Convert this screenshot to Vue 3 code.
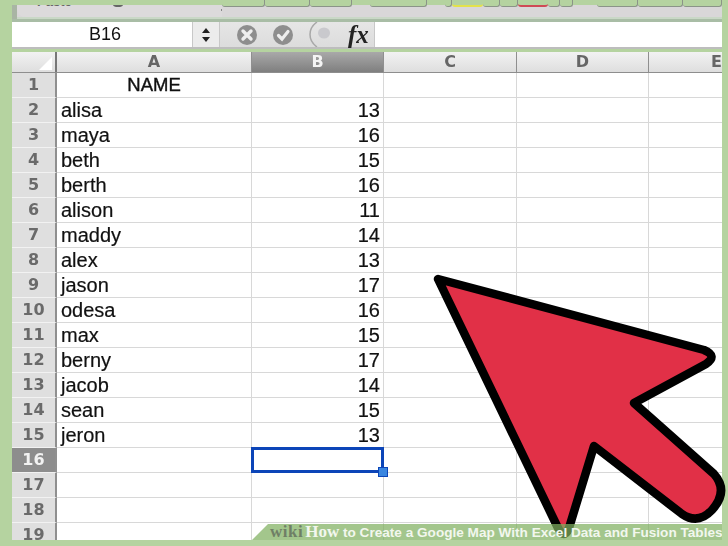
<script setup>
const columns = ['A', 'B', 'C', 'D', 'E']

const people = [
  ['alisa', 13], ['maya', 16], ['beth', 15], ['berth', 16], ['alison', 11],
  ['maddy', 14], ['alex', 13], ['jason', 17], ['odesa', 16], ['max', 15],
  ['berny', 17], ['jacob', 14], ['sean', 15], ['jeron', 13]
]

const rows = [
  { n: 1, name: 'NAME', score: '', head: true },
  ...people.map(([name, score], i) => ({ n: i + 2, name, score })),
  { n: 16, name: '', score: '', active: true },
  { n: 17, name: '', score: '' },
  { n: 18, name: '', score: '' },
  { n: 19, name: '', score: '' }
]

// top ribbon tabs, left to right
const tabs = [
  { w: 43 }, { w: 45 }, { w: 42 }, { w: 0, gap: 18 }, { w: 57 }, { w: 0, gap: 18 },
  { w: 7 }, { w: 31, tone: 'yellow' }, { w: 17 }, { w: 18 }, { w: 30, tone: 'red' }, { w: 12 }, { w: 13 },
  { w: 0, gap: 24 }, { w: 41 }, { w: 45 }, { w: 39 }
]
</script>

<template>
  <div class="page">
    <div class="ribbon">
      <div class="home"><span class="paste">Paste</span><i class="knob"></i><i class="dot"></i></div>
      <template v-for="(t, i) in tabs" :key="i">
        <div v-if="t.w" class="tab" :class="t.tone" :style="{ width: t.w + 'px' }"></div>
        <div v-else class="notch" :style="{ width: t.gap + 'px' }"></div>
      </template>
    </div>

    <div class="formula">
      <div class="namebox">B16</div>
      <div class="stepper">
        <svg width="10" height="20" viewBox="0 0 10 20">
          <path d="M5 3 9 8H1Z M5 17 1 12H9Z" fill="#222" />
        </svg>
      </div>
      <div class="actions">
        <svg width="20" height="20" viewBox="0 0 20 20">
          <circle cx="10" cy="10" r="10" fill="#8e8e8e" />
          <path d="M6 6 14 14M14 6 6 14" stroke="#eee" stroke-width="3.4" stroke-linecap="round" />
        </svg>
        <svg width="20" height="20" viewBox="0 0 20 20">
          <circle cx="10" cy="10" r="10" fill="#8e8e8e" />
          <path d="M5.5 10.5 9 14 15 6.5" fill="none" stroke="#eee" stroke-width="3.2" stroke-linecap="round" />
        </svg>
        <div class="fx-wrap">
          <svg width="26" height="25" viewBox="0 0 26 25">
            <path d="M8 0Q1 5 1 12.5 1 20 8 25" fill="none" stroke="#a8a8a8" stroke-width="1.5" />
            <ellipse cx="15" cy="11" rx="6" ry="5.5" fill="#c9c9cd" />
          </svg>
          <span class="fx">fx</span>
        </div>
      </div>
      <div class="input"></div>
    </div>

    <div class="sheet">
      <div class="colhead">
        <div class="corner"><i></i></div>
        <div v-for="c in columns" :key="c" class="col" :class="{ on: c === 'B' }">{{ c }}</div>
      </div>
      <div v-for="r in rows" :key="r.n" class="row">
        <div class="rownum" :class="{ on: r.active }">{{ r.n }}</div>
        <div class="cell name" :class="{ head: r.head }">{{ r.name }}</div>
        <div class="cell score" :class="{ picked: r.active }">
          {{ r.score }}
          <i v-if="r.active" class="handle"></i>
        </div>
        <div class="cell"></div>
        <div class="cell"></div>
        <div class="cell last"></div>
      </div>
    </div>

    <svg class="arrow" width="728" height="546" viewBox="0 0 728 546">
      <path
        d="M438 279 704 350Q718 356 706 364L634 403 714 474Q729 491 712 510 698 525 682 514L594 446 569 528Q564 540 558 528Z"
        fill="#e13047"
        stroke="#000"
        stroke-width="8.5"
        stroke-linejoin="round"
      />
    </svg>

    <div class="banner">
      <span class="wiki">wiki</span><span class="how">How</span><span class="title"> to Create a Google Map With Excel Data and Fusion Tables</span>
    </div>
  </div>
</template>

<style scoped>
.page {
  width: 728px;
  height: 546px;
  box-sizing: border-box;
  padding: 0 6px 0 12px;
  background: #b5d3a0;
  overflow: hidden;
  position: relative;
  font-family: 'Liberation Sans', Arial, sans-serif;
}

.ribbon {
  height: 22px;
  box-sizing: border-box;
  padding-left: 5px;
  display: flex;
  align-items: flex-start;
  border-bottom: 3px solid #a9bda6;
  background: linear-gradient(#b5d3a0 0 5px, #d9d7d8 5px 17px, #c9d8c6 17px);
  overflow: hidden;
  position: relative;
}

.ribbon::before {
  content: '';
  position: absolute;
  left: 0;
  top: 5px;
  bottom: 0;
  width: 5px;
  background: #a9b5a4;
}

.home {
  width: 205px;
  height: 12px;
  margin-top: 5px;
  flex: none;
  position: relative;
  overflow: hidden;
  background: #dcdadb;
  border-radius: 0 0 0 8px;
  font-size: 13px;
  font-weight: 700;
  color: #666;
}

.paste {
  position: absolute;
  left: 20px;
  top: -11px;
}

.knob {
  position: absolute;
  left: 96px;
  top: -3px;
  width: 10px;
  height: 5px;
  border-radius: 50%;
  background: #666;
}

.dot {
  position: absolute;
  right: -1px;
  top: 4px;
  width: 2px;
  height: 2px;
  background: #888;
}

.tab {
  flex: none;
  height: 7px;
  box-sizing: border-box;
  background: #b5d3a0;
  border-bottom: 1.5px solid #8b9488;
  border-right: 1px solid #8b9488;
  border-radius: 0 0 3px 3px;
}

.tab.yellow {
  border-bottom: 2px solid #e3e24a;
  border-right: 0;
}

.tab.red {
  border-bottom: 2px solid #cf4a55;
  border-right: 0;
}

.notch {
  flex: none;
  height: 5px;
}

.formula {
  height: 27px;
  box-sizing: border-box;
  display: flex;
  background: #fff;
  border-bottom: 2px solid #bdbdbd;
}

.namebox {
  width: 180px;
  flex: none;
  box-sizing: border-box;
  padding-left: 6px;
  font-size: 18px;
  line-height: 25px;
  text-align: center;
  color: #111;
  filter: blur(0.3px);
}

.stepper {
  width: 28px;
  flex: none;
  background: #ececec;
  border-left: 1px solid #c8c8c8;
  border-right: 1px solid #c8c8c8;
  box-sizing: border-box;
  display: flex;
  align-items: center;
  justify-content: center;
}

.actions {
  width: 155px;
  flex: none;
  display: flex;
  align-items: center;
  gap: 16px;
  padding-left: 17px;
  box-sizing: border-box;
  background: linear-gradient(#e6e6e6, #dcdcdc);
  border-right: 1px solid #c8c8c8;
}

.fx-wrap {
  display: flex;
  align-items: center;
  height: 25px;
  gap: 13px;
  filter: blur(0.3px);
}

.fx {
  font-family: 'Liberation Serif', serif;
  font-style: italic;
  font-weight: 700;
  font-size: 25px;
  line-height: 25px;
  color: #222;
}

.input {
  flex: 1;
}

.sheet {
  margin-top: 3px;
  height: 488px;
  overflow: hidden;
}

.colhead,
.row {
  display: grid;
  grid-template-columns: 45px 195px 132px 133px 132px 1fr;
}

.colhead {
  height: 21px;
  border-bottom: 1.5px solid #8e8e8e;
  box-sizing: border-box;
  background: linear-gradient(#f2f2f2, #dedede);
}

.corner {
  border-right: 2px solid #777;
  position: relative;
}

.corner i {
  position: absolute;
  right: 3px;
  bottom: 2px;
  border-style: solid;
  border-width: 0 0 13px 13px;
  border-color: transparent transparent #fff transparent;
}

.col {
  border-right: 1.5px solid #8f8f8f;
  text-align: center;
  font-family: 'DejaVu Sans', sans-serif;
  font-weight: 700;
  font-size: 16px;
  line-height: 20px;
  color: #666;
  box-sizing: border-box;
  filter: blur(0.3px);
}

.col:last-child {
  border-right: 0;
  text-align: left;
  padding-left: 62px;
}

.col.on {
  background: linear-gradient(#a9a9a9, #7f7f7f);
  color: #f4f4f4;
}

.row {
  height: 25px;
}

.rownum {
  background: #dfdfdf;
  border-right: 2px solid #8f8f8f;
  border-bottom: 1.5px solid #f2f2f2;
  box-sizing: border-box;
  text-align: center;
  font-family: 'DejaVu Sans', sans-serif;
  font-weight: 700;
  font-size: 16px;
  line-height: 24px;
  color: #6a6a6a;
  filter: blur(0.3px);
}

.rownum.on {
  background: #8d8d8d;
  color: #f2f2f2;
}

.cell {
  border-right: 1.5px solid #d8d8d8;
  border-bottom: 1.5px solid #d8d8d8;
  box-sizing: border-box;
  font-size: 20px;
  line-height: 24px;
  color: #111;
  padding: 0 3px 0 4px;
  position: relative;
  background: #fff;
  filter: blur(0.3px);
  -webkit-text-stroke: 0.2px #111;
}

.cell.last {
  border-right: 0;
}

.name.head {
  text-align: center;
  font-size: 18.5px;
  padding: 0;
  -webkit-text-stroke: 0.4px #111;
}

.score {
  text-align: right;
}

.cell.picked {
  border: 3px solid #0c45b8;
  margin: -1px 0 -1px -1px;
  height: 26px;
  filter: none;
  z-index: 2;
}

.handle {
  position: absolute;
  right: -7px;
  bottom: -7px;
  width: 8px;
  height: 8px;
  background: #3a86e0;
  border: 1px solid #0c45b8;
}

.arrow {
  position: absolute;
  left: 0;
  top: 0;
  z-index: 3;
  pointer-events: none;
}

.banner {
  position: absolute;
  left: 252px;
  right: 6px;
  bottom: 6px;
  height: 16px;
  padding-left: 18px;
  z-index: 4;
  background: rgba(128, 176, 96, 0.72);
  clip-path: polygon(16px 0, 100% 0, 100% 100%, 0 100%);
  font-weight: 700;
  font-size: 13.6px;
  line-height: 16px;
  color: #f2f7ee;
  white-space: pre;
  overflow: hidden;
}

.wiki,
.how {
  font-family: 'Liberation Serif', serif;
  font-size: 17px;
}

.wiki {
  color: #6f7f66;
  letter-spacing: 0.5px;
  margin-right: 2px;
}
</style>

<style>
html,
body {
  margin: 0;
  background: #b5d3a0;
}
</style>
